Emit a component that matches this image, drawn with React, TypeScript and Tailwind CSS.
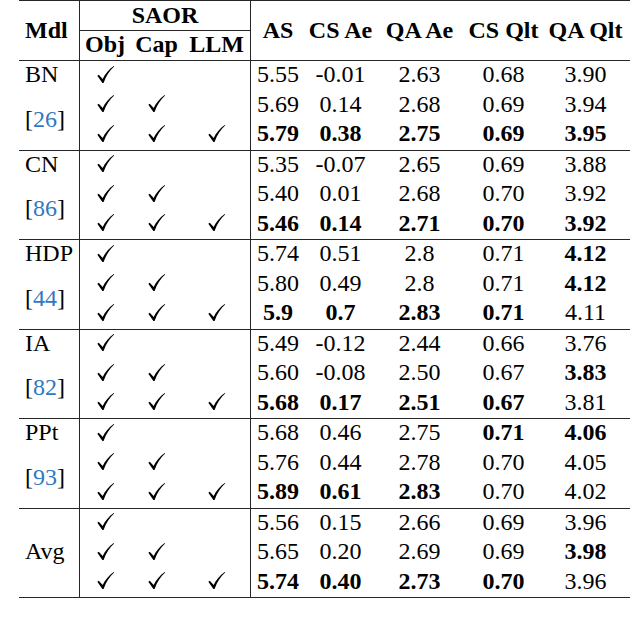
import React from "react";

type Cell = [string, boolean];
type Group = { name: string; ref?: string; rows: Cell[][] };

const b = (v: string): Cell => [v, true];
const n = (v: string): Cell => [v, false];

const groups: Group[] = [
  {
    name: "BN",
    ref: "26",
    rows: [
      [n("5.55"), n("-0.01"), n("2.63"), n("0.68"), n("3.90")],
      [n("5.69"), n("0.14"), n("2.68"), n("0.69"), n("3.94")],
      [b("5.79"), b("0.38"), b("2.75"), b("0.69"), b("3.95")],
    ],
  },
  {
    name: "CN",
    ref: "86",
    rows: [
      [n("5.35"), n("-0.07"), n("2.65"), n("0.69"), n("3.88")],
      [n("5.40"), n("0.01"), n("2.68"), n("0.70"), n("3.92")],
      [b("5.46"), b("0.14"), b("2.71"), b("0.70"), b("3.92")],
    ],
  },
  {
    name: "HDP",
    ref: "44",
    rows: [
      [n("5.74"), n("0.51"), n("2.8"), n("0.71"), b("4.12")],
      [n("5.80"), n("0.49"), n("2.8"), n("0.71"), b("4.12")],
      [b("5.9"), b("0.7"), b("2.83"), b("0.71"), n("4.11")],
    ],
  },
  {
    name: "IA",
    ref: "82",
    rows: [
      [n("5.49"), n("-0.12"), n("2.44"), n("0.66"), n("3.76")],
      [n("5.60"), n("-0.08"), n("2.50"), n("0.67"), b("3.83")],
      [b("5.68"), b("0.17"), b("2.51"), b("0.67"), n("3.81")],
    ],
  },
  {
    name: "PPt",
    ref: "93",
    rows: [
      [n("5.68"), n("0.46"), n("2.75"), b("0.71"), b("4.06")],
      [n("5.76"), n("0.44"), n("2.78"), n("0.70"), n("4.05")],
      [b("5.89"), b("0.61"), b("2.83"), n("0.70"), n("4.02")],
    ],
  },
  {
    name: "Avg",
    rows: [
      [n("5.56"), n("0.15"), n("2.66"), n("0.69"), n("3.96")],
      [n("5.65"), n("0.20"), n("2.69"), n("0.69"), b("3.98")],
      [b("5.74"), b("0.40"), b("2.73"), b("0.70"), n("3.96")],
    ],
  },
];

const dataCols = ["w-[54px]", "w-[71px]", "w-[87px]", "w-[81px]", "w-[86px] pr-[3px]"];
const saorCols = ["w-[50px]", "w-[53px]", "w-[67px]"];

function Check() {
  return (
    <svg width="19" height="19" viewBox="0 0 20 20" aria-hidden="true">
      <path
        d="M1.4 11.3 L2.9 10.3 L7 14.8 C9.6 9.2 13.4 4.7 18.6 1 L19.1 1.6 C14.4 5.7 10.8 11.2 8 19 L6.7 19 Z"
        fill="#000"
      />
    </svg>
  );
}

export default function App() {
  const line = "border-[#262626]";
  return (
    <div className="w-[640px] h-[630px] bg-white text-black font-['Liberation_Serif','Times_New_Roman',serif]">
      <div className={`ml-[19px] w-[611px] border-t ${line} text-[24px] leading-none`}>
        {/* Header */}
        <div className={`flex h-[60px] border-b ${line}`}>
          <div className="w-[60px] flex items-center pl-[6px] pb-[2px] font-bold">Mdl</div>
          <div className={`w-[172px] flex flex-col border-l border-r ${line}`}>
            <div className={`h-[30px] flex items-center justify-center border-b ${line} font-bold pb-[2px]`}>
              SAOR
            </div>
            <div className="flex-1 flex font-bold">
              {["Obj", "Cap", "LLM"].map((t, i) => (
                <div key={t} className={`${saorCols[i]} flex items-center justify-center pb-[3px]`}>
                  {t}
                </div>
              ))}
            </div>
          </div>
          {["AS", "CS Ae", "QA Ae", "CS Qlt", "QA Qlt"].map((t, i) => (
            <div
              key={t}
              className={`${dataCols[i]} flex items-center justify-center font-bold pb-[2px] whitespace-nowrap`}
            >
              {t}
            </div>
          ))}
        </div>

        {/* Groups */}
        {groups.map((g) => (
          <div key={g.name} className={`flex border-b ${line}`}>
            <div className="w-[60px] pl-[6px]">
              {g.ref ? (
                <div className="flex flex-col">
                  <div className="h-[29.5px] flex items-center pb-[3px]">{g.name}</div>
                  <div className="h-[29.5px] mt-[15px] flex items-center pb-[3px]">
                    [<span className="text-[#2f78c2]">{g.ref}</span>]
                  </div>
                </div>
              ) : (
                <div className="h-full flex items-center pb-[3px]">{g.name}</div>
              )}
            </div>
            <div className={`w-[172px] border-l border-r ${line} flex flex-col`}>
              {[1, 2, 3].map((k) => (
                <div key={k} className="h-[29.5px] flex">
                  {saorCols.map((c, i) => (
                    <div key={i} className={`${c} flex items-center justify-center pb-[3px]`}>
                      {i < k ? <Check /> : null}
                    </div>
                  ))}
                </div>
              ))}
            </div>
            <div className="flex flex-col">
              {g.rows.map((r, ri) => (
                <div key={ri} className="h-[29.5px] flex">
                  {r.map(([v, bold], ci) => (
                    <div
                      key={ci}
                      className={`${dataCols[ci]} flex items-center justify-center pb-[3px] ${bold ? "font-bold" : ""}`}
                    >
                      {v}
                    </div>
                  ))}
                </div>
              ))}
            </div>
          </div>
        ))}
      </div>
    </div>
  );
}
